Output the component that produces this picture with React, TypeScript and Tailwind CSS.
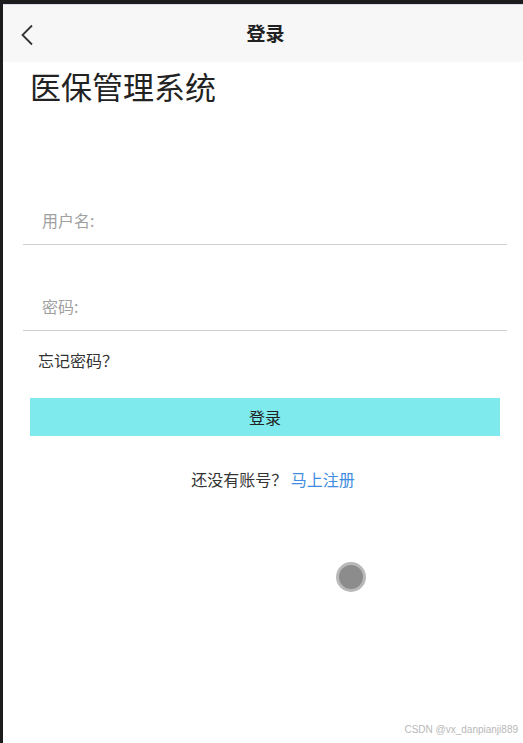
import React from 'react'

const FONT = '"Microsoft YaHei", "Noto Sans CJK SC", "Liberation Sans", sans-serif'

function BackIcon() {
  return (
    <svg width="14" height="22" viewBox="0 0 14 22" fill="none" stroke="#333" strokeWidth="1.8">
      <path d="M12 1.5L2.5 11L12 20.5" />
    </svg>
  )
}

function Field({ label }: { label: string }) {
  return (
    <div className="ml-[20px] mr-[16px] h-[58px] border-b border-[#cfcfcf] flex items-end pb-[12px] pl-[19px]">
      <span className="text-[16px] text-[#a0a0a0]">{label}</span>
    </div>
  )
}

export default function App() {
  return (
    <div className="w-[523px] h-[743px] bg-[#1c1c1c] flex flex-col overflow-hidden" style={{ fontFamily: FONT }}>
      <div className="h-[4px] shrink-0" />
      <div className="flex-1 flex">
        <div className="w-[3px] shrink-0" />
        <div className="flex-1 bg-white flex flex-col relative">
          {/* Header */}
          <div className="h-px bg-[#dcdcec]" />
          <div className="h-[57px] bg-[#f7f7f7] flex items-center relative">
            <div className="pl-[17px] pt-[2px]"><BackIcon /></div>
            <div className="absolute inset-0 flex items-center justify-center pl-[5px]">
              <span className="text-[19px] font-bold text-[#222]">登录</span>
            </div>
          </div>

          {/* Title */}
          <div className="pl-[27px] pt-[2px] text-[31px] leading-[44px] text-[#222]">医保管理系统</div>

          <div className="h-[79px]" />
          <Field label="用户名:" />
          <div className="h-[28px]" />
          <Field label="密码:" />

          <div className="pl-[35px] pt-[18px] text-[16px] leading-[22px] text-[#333]">忘记密码？</div>

          <div className="ml-[27px] mr-[23px] mt-[27px] h-[38px] bg-[#7eeaed] flex items-center justify-center">
            <span className="text-[16px] text-[#222]">登录</span>
          </div>

          <div className="mt-[32px] text-center text-[16px] leading-[22px] text-[#333] pl-[20px]">
            还没有账号？ <span className="text-[#3f8de0]">马上注册</span>
          </div>

          <div className="absolute left-[333px] top-[558px] w-[30px] h-[30px] rounded-full bg-[#8c8c8c] border-[3px] border-[#b9b9b9] blur-[0.5px]" />

          <div className="absolute right-[5px] bottom-[6px] text-[10px] text-[#b8b8b8]" style={{ fontFamily: '"Liberation Sans", sans-serif' }}>
            CSDN @vx_danpianji889
          </div>
        </div>
      </div>
    </div>
  )
}
